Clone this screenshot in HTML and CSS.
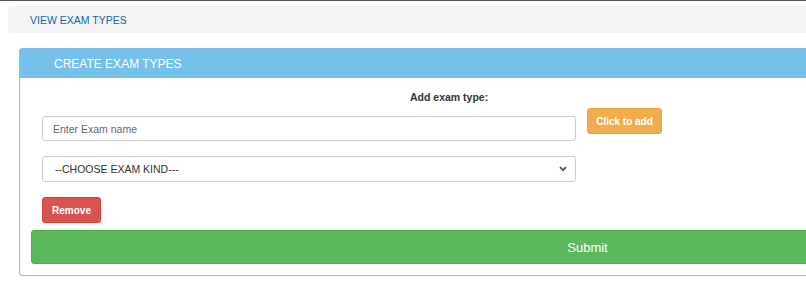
FILE: index.html
```html
<!DOCTYPE html>
<html lang="en">
  <head>
    <meta charset="UTF-8" />
    <meta name="viewport" content="width=device-width, initial-scale=1.0" />
    <title>Exam Types</title>
    <link rel="stylesheet" href="styles.css">
  </head>
  <body>
    <div class="page">
      <div class="breadcrumb">
        <a href="#">VIEW EXAM TYPES</a>
      </div>

      <div class="panel">
        <div class="panel-heading">CREATE EXAM TYPES</div>
        <div class="panel-body">
          <label class="form-label" for="examName">Add exam type:</label>
          <div class="form-row">
            <div class="form-fields">
              <input id="examName" class="form-control" type="text" placeholder="Enter Exam name" />
              <div class="select-wrap">
                <select class="form-control form-select">
                  <option>--CHOOSE EXAM KIND---</option>
                </select>
                <svg class="select-arrow" width="8" height="6" viewBox="0 0 8 6">
                  <path d="M1 1.2 L4 4.2 L7 1.2" fill="none" stroke="#555" stroke-width="1.8" />
                </svg>
              </div>
              <div>
                <button class="btn btn-danger">Remove</button>
              </div>
            </div>
            <button class="btn btn-warning">Click to add</button>
          </div>
          <button class="btn btn-success">Submit</button>
        </div>
      </div>
    </div>
  </body>
</html>
```

FILE: styles.css
```css
body {
  margin: 0;
  border-top: 1px solid #555;
  font-family: "Liberation Sans", Arial, sans-serif;
  color: #333;
  overflow: hidden;
  background: #fff;
}

.page {
  width: 1148px;
  margin-left: 8px;
  padding-top: 5px;
}

.breadcrumb {
  background-color: #f4f4f4;
  border-radius: 4px;
  height: 27px;
  padding-left: 22px;
  display: flex;
  align-items: center;
  font-size: 10.5px;
}

.breadcrumb a {
  color: #1565a8;
  text-decoration: none;
}

.panel {
  margin: 15px 0 0 11px;
  border: 1px solid #86bfe9;
  border-radius: 3px;
}

.panel-heading {
  background-color: #75c1ea;
  color: #fff;
  height: 29px;
  padding-left: 34px;
  display: flex;
  align-items: center;
  font-size: 12px;
}

.panel-body {
  padding: 12px 11px 11px 11px;
}

.form-label {
  display: block;
  margin-left: 379px;
  font-size: 10.5px;
  font-weight: bold;
  line-height: 14px;
  color: #333;
}

.form-row {
  display: flex;
  align-items: flex-start;
  gap: 11px;
  margin-top: 4px;
  padding-left: 11px;
}

.form-fields {
  width: 534px;
  padding-top: 8px;
  display: flex;
  flex-direction: column;
  gap: 15px;
}

.form-control {
  box-sizing: border-box;
  width: 100%;
  height: 25px;
  border: 1px solid #ccc;
  border-radius: 3px;
  padding: 0 10px;
  font-family: inherit;
  font-size: 10.5px;
  color: #555;
  background: #fff;
  outline: none;
}

.form-control::placeholder {
  color: #666;
}

.select-wrap {
  position: relative;
}

.form-select {
  height: 26px;
  appearance: none;
  -webkit-appearance: none;
  padding-left: 12px;
  color: #333;
}

.select-arrow {
  position: absolute;
  right: 9px;
  top: 10px;
}

.btn {
  border: 1px solid transparent;
  border-radius: 3px;
  color: #fff;
  font-family: inherit;
  cursor: pointer;
}

.btn-danger {
  background-color: #d9534f;
  border-color: #d43f3a;
  height: 26px;
  width: 59px;
  font-size: 10px;
  font-weight: bold;
}

.btn-warning {
  background-color: #f0ad4e;
  border-color: #eea236;
  height: 26px;
  width: 75px;
  font-size: 10px;
  font-weight: bold;
}

.btn-success {
  display: block;
  width: 100%;
  height: 34px;
  margin-top: 7px;
  background-color: #5cb85c;
  border-color: #4cae4c;
  font-size: 13px;
}
```
